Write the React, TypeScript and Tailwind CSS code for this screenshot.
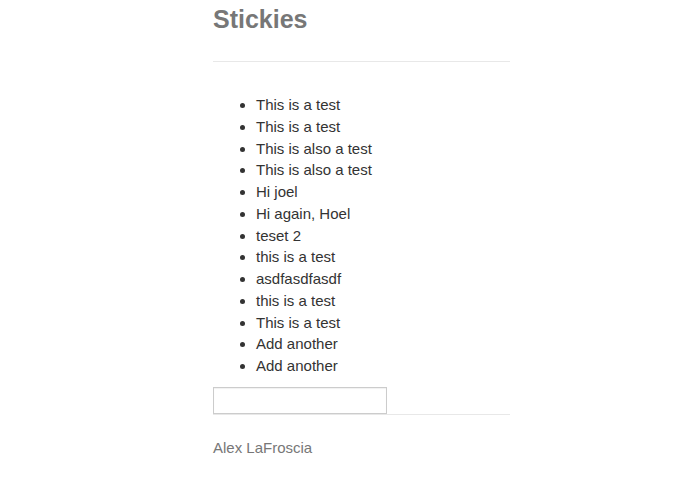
import React from "react";

const items = [
  "This is a test",
  "This is a test",
  "This is also a test",
  "This is also a test",
  "Hi joel",
  "Hi again, Hoel",
  "teset 2",
  "this is a test",
  "asdfasdfasdf",
  "this is a test",
  "This is a test",
  "Add another",
  "Add another",
];

export default function App() {
  return (
    <div className="min-h-[494px] bg-white" style={{ fontFamily: '"Liberation Sans", Arial, sans-serif' }}>
      <div className="ml-[213px] w-[297px]">
        <h1 className="pt-[4px] text-[25px] leading-[30px] font-bold text-[#777777]">Stickies</h1>
        <div className="mt-[27px] h-px bg-[#e8e8e8]" />
        <ul className="mt-[32px] list-disc pl-[43px] text-[15px] leading-[21.75px] text-[#333333]">
          {items.map((t, i) => (
            <li key={i}>{t}</li>
          ))}
        </ul>
        <div className="relative mt-[10px] h-[28px]">
          <div className="absolute left-0 right-0 top-[27px] h-px bg-[#e8e8e8]" />
          <input
            type="text"
            className="relative block h-[27px] w-[174px] border border-[#cccccc] bg-white shadow-[inset_0_1px_1px_rgba(0,0,0,0.06)] outline-none"
          />
        </div>
        <p className="mt-[24px] text-[15px] leading-[17px] text-[#777777]">Alex LaFroscia</p>
      </div>
    </div>
  );
}
